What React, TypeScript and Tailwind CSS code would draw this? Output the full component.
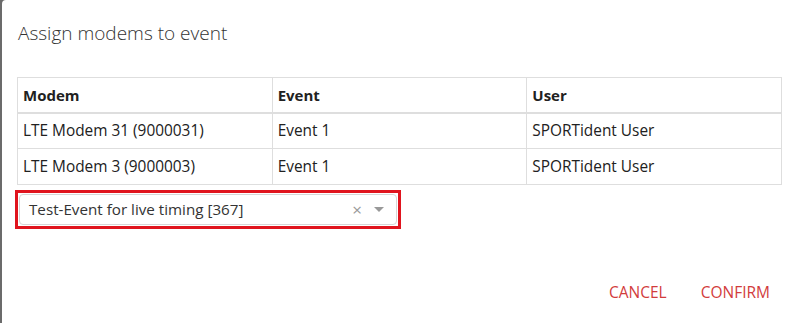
const rows = [
  { modem: "LTE Modem 31 (9000031)", event: "Event 1", user: "SPORTident User" },
  { modem: "LTE Modem 3 (9000003)", event: "Event 1", user: "SPORTident User" },
];

export default function App() {
  return (
    <div className="h-[323px] w-[796px] overflow-hidden bg-[#6b6b6b] pl-[2px] font-['Open_Sans',sans-serif] text-[#212121]">
      <div className="flex h-[340px] w-[820px] flex-col rounded-[4px] bg-white">
        <h2 className="px-4 pt-[20px] text-[19px] font-light leading-[26px] text-[#333]">
          Assign modems to event
        </h2>
        <div className="px-[15px] pt-[31px]">
          <table className="w-[765px] table-fixed border-collapse text-[15.4px]">
            <thead>
              <tr className="h-[35px] border-b-2 border-[#dedede]">
                <th className="border border-[#dedede] px-[5px] text-left text-[15px] font-bold">Modem</th>
                <th className="border border-[#dedede] px-[5px] text-left text-[15px] font-bold">Event</th>
                <th className="border border-[#dedede] px-[5px] text-left text-[15px] font-bold">User</th>
              </tr>
            </thead>
            <tbody>
              {rows.map((r) => (
                <tr key={r.modem} className="h-[36px]">
                  <td className="border border-[#dedede] px-[5px]">{r.modem}</td>
                  <td className="border border-[#dedede] px-[5px]">{r.event}</td>
                  <td className="border border-[#dedede] px-[5px]">{r.user}</td>
                </tr>
              ))}
            </tbody>
          </table>
          <div className="-ml-[2px] mt-[5px] w-[386px] border-[3px] border-[#e0141e] p-px">
            <div className="flex h-[31px] items-center rounded-[4px] border border-[#d6d6d6] pl-[9px] pr-[12px] text-[15.2px] text-[#333]">
              <span className="flex-1">Test-Event for live timing [367]</span>
              <span className="mr-[12px] text-[17px] leading-none text-[#999]">×</span>
              <svg width="10" height="6" viewBox="0 0 10 6">
                <path d="M0 0h10L5 5z" fill="#999" />
              </svg>
            </div>
          </div>
        </div>
        <div className="flex justify-end gap-[34px] pr-[52px] pt-[52px] text-[15.5px] text-[#d23c3c]">
          <span>CANCEL</span>
          <span>CONFIRM</span>
        </div>
      </div>
    </div>
  );
}
